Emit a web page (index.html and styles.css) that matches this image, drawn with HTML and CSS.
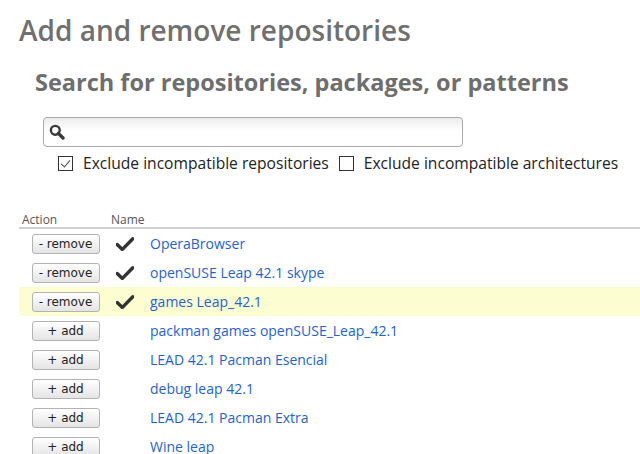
FILE: index.html
```html
<!DOCTYPE html>
<html lang="en">
<head>
    <meta charset="UTF-8">
    <title>Add and remove repositories</title>
    <link rel="stylesheet" href="styles.css">
</head>
<body>
    <h1 class="page-title">Add and remove repositories</h1>
    <h2 class="search-title">Search for repositories, packages, or patterns</h2>

    <div class="search-box">
        <svg class="search-icon" width="16" height="16" viewBox="0 0 16 16">
            <circle cx="6.3" cy="6.3" r="4.4" fill="none" stroke="#3a3a3a" stroke-width="2.4"/>
            <path d="M9.4 9.4 L14 14" stroke="#3a3a3a" stroke-width="3.4" stroke-linecap="round"/>
        </svg>
        <input type="text" class="search-input">
    </div>

    <div class="filters">
        <label class="filter"><span class="box checked"></span>Exclude incompatible repositories</label>
        <label class="filter"><span class="box"></span>Exclude incompatible architectures</label>
    </div>

    <table class="repos">
        <thead>
            <tr>
                <th class="col-action">Action</th>
                <th class="col-name" colspan="2">Name</th>
            </tr>
        </thead>
        <tbody id="repoRows"></tbody>
    </table>

    <script>
        // Repositories: installed ones get a check mark and a remove button
        const repos = [
            { name: 'OperaBrowser', installed: true },
            { name: 'openSUSE Leap 42.1 skype', installed: true },
            { name: 'games Leap_42.1', installed: true, hover: true },
            { name: 'packman games openSUSE_Leap_42.1', installed: false },
            { name: 'LEAD 42.1 Pacman Esencial', installed: false },
            { name: 'debug leap 42.1', installed: false },
            { name: 'LEAD 42.1 Pacman Extra', installed: false },
            { name: 'Wine leap', installed: false }
        ];

        const checkSvg = '<svg width="18" height="14" viewBox="0 0 18 14"><path d="M1.2 7.6 L6.4 12.4 L16.8 1.8" fill="none" stroke="#333" stroke-width="3.4" stroke-linejoin="round" stroke-linecap="round"/></svg>';

        const rows = document.getElementById('repoRows');
        repos.forEach(function (repo) {
            const tr = document.createElement('tr');
            if (repo.hover) tr.className = 'highlight';
            tr.innerHTML =
                '<td class="col-action"><button class="btn">' + (repo.installed ? '- remove' : '+ add') + '</button></td>' +
                '<td class="col-check">' + (repo.installed ? checkSvg : '') + '</td>' +
                '<td class="col-link"><a href="#">' + repo.name + '</a></td>';
            rows.appendChild(tr);
        });
    </script>
</body>
</html>
```

FILE: styles.css
```css
body {
    margin: 0;
    padding: 0;
    background-color: #fff;
    font-family: "Open Sans", sans-serif;
    overflow: hidden;
}

.page-title {
    margin: 0;
    padding: 12px 0 0 19px;
    font-size: 28px;
    font-weight: 600;
    line-height: 36px;
    color: #707070;
}

.search-title {
    margin: 0;
    padding: 19px 0 0 35px;
    font-size: 23.5px;
    font-weight: 700;
    line-height: 30px;
    color: #6e6e6e;
}

.search-box {
    position: relative;
    margin: 20px 0 0 43px;
    width: 420px;
    height: 30px;
}

.search-input {
    box-sizing: border-box;
    width: 100%;
    height: 100%;
    border: 1px solid #a9a9a9;
    border-radius: 4px;
    background: linear-gradient(#ececec, #fff 45%);
    padding-left: 26px;
    font-family: inherit;
    font-size: 14px;
}

.search-icon {
    position: absolute;
    left: 6px;
    top: 7px;
}

.filters {
    display: flex;
    gap: 10px;
    margin: 5px 0 0 58px;
    font-size: 15.6px;
    color: #222;
}

.filter {
    display: flex;
    align-items: center;
    gap: 10px;
    line-height: 22px;
}

.box {
    box-sizing: border-box;
    width: 15px;
    height: 15px;
    border: 1px solid #333;
    background: #fff;
    position: relative;
}

.box.checked::after {
    content: "";
    position: absolute;
    left: 3.5px;
    top: 1px;
    width: 4px;
    height: 8px;
    border: solid #444;
    border-width: 0 1px 1px 0;
    transform: rotate(40deg);
}

.repos {
    margin: 36px 0 0 19px;
    width: 621px;
    border-collapse: collapse;
    font-size: 14px;
}

.repos th {
    text-align: left;
    font-weight: 400;
    font-size: 12px;
    color: #555;
    padding: 3px 3px 0;
    line-height: 14px;
    border-bottom: 2px solid #d0d0d0;
}

.repos th.col-action {
    width: 83px;
}

.repos td {
    height: 29px;
    padding: 0;
}

.repos tr.highlight td {
    background-color: #fdfdd2;
}

.col-action {
    text-align: center;
}

.col-action .btn {
    margin-left: 4px;
}

.col-check {
    width: 34px;
    padding-left: 8px !important;
    vertical-align: middle;
}

.col-check svg {
    display: block;
}

.col-link a {
    color: #1f62d4;
    text-decoration: none;
}

.btn {
    width: 68px;
    height: 20px;
    padding: 0;
    border: 1px solid #b3b3b3;
    border-radius: 3px;
    background: linear-gradient(#ffffff, #e4e4e4);
    font-family: "DejaVu Sans", sans-serif;
    font-size: 12px;
    color: #222;
    cursor: pointer;
}
```
